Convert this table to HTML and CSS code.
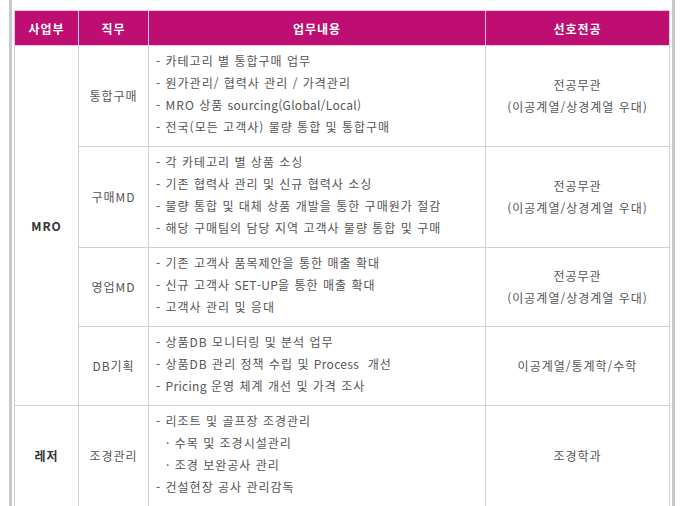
FILE: index.html
```html
<!DOCTYPE html>
<html lang="ko">
<head>
<meta charset="utf-8">
<link rel="stylesheet" href="styles.css">
</head>
<body>
<div class="wrap">
<table class="jobs">
<colgroup>
<col class="c1"><col class="c2"><col class="c3"><col class="c4">
</colgroup>
<thead>
<tr><th>사업부</th><th>직무</th><th>업무내용</th><th>선호전공</th></tr>
</thead>
<tbody>
<tr>
<td class="div" rowspan="4">MRO</td>
<td class="job">통합구매</td>
<td class="desc">- 카테고리 별 통합구매 업무<br>- 원가관리/ 협력사 관리 / 가격관리<br>- MRO 상품 <span class="en">sourcing(Global/Local)</span><br>- 전국(모든 고객사) 물량 통합 및 통합구매</td>
<td class="major">전공무관<br>(이공계열/상경계열 우대)</td>
</tr>
<tr>
<td class="job">구매MD</td>
<td class="desc">- 각 카테고리 별 상품 소싱<br>- 기존 협력사 관리 및 신규 협력사 소싱<br>- 물량 통합 및 대체 상품 개발을 통한 구매원가 절감<br>- 해당 구매팀의 담당 지역 고객사 물량 통합 및 구매</td>
<td class="major">전공무관<br>(이공계열/상경계열 우대)</td>
</tr>
<tr>
<td class="job">영업MD</td>
<td class="desc">- 기존 고객사 품목제안을 통한 매출 확대<br>- 신규 고객사 <span class="en">SET-UP</span>을 통한 매출 확대<br>- 고객사 관리 및 응대</td>
<td class="major">전공무관<br>(이공계열/상경계열 우대)</td>
</tr>
<tr>
<td class="job">DB기획</td>
<td class="desc">- 상품DB 모니터링 및 분석 업무<br>- 상품DB 관리 정책 수립 및 <span class="en">Process</span>&nbsp; 개선<br>- <span class="en">Pricing</span> 운영 체계 개선 및 가격 조사</td>
<td class="major">이공계열/통계학/수학</td>
</tr>
<tr>
<td class="div">레저</td>
<td class="job">조경관리</td>
<td class="desc">- 리조트 및 골프장 조경관리<br><span class="sub">· 수목 및 조경시설관리</span><br><span class="sub">· 조경 보완공사 관리</span><br>- 건설현장 공사 관리감독</td>
<td class="major">조경학과</td>
</tr>
</tbody>
</table>
</div>
</body>
</html>
```
FILE: styles.css
```css
html, body {
  margin: 0;
  padding: 0;
  background: #fff;
}
body {
  font-family: "Noto Sans CJK KR", "Noto Sans", sans-serif;
  font-size: 12px;
  color: #555;
  letter-spacing: 1px;
}
.wrap {
  margin-left: 9px;
  padding: 10px 3px 0 2px;
  border-left: 3px solid #c9c9c9;
  border-right: 3px solid #c9c9c9;
  min-height: 520px;
  box-sizing: border-box;
  width: 666px;
}
.jobs {
  border-collapse: collapse;
  table-layout: fixed;
  width: 655px;
}
.c1 { width: 64px; }
.c2 { width: 70px; }
.c3 { width: 337px; }
.c4 { width: 184px; }
.jobs th {
  background: #be0e71;
  color: #fff;
  font-weight: bold;
  height: 34px;
  padding: 0;
  border: 1px solid #efc3e2;
  font-size: 12px;
  text-align: center;
}
.jobs td {
  border: 1px solid #d2d2d2;
  padding: 4px 7px 8px;
  line-height: 22px;
  vertical-align: middle;
}
.jobs td.div {
  text-align: center;
  font-weight: bold;
  color: #333;
  padding: 0;
}
.jobs td.job {
  text-align: center;
  padding: 0;
}
.jobs td.desc {
  text-align: left;
}
.jobs td.major {
  text-align: center;
  padding: 0;
}
.sub {
  padding-left: 10px;
}
.en {
  letter-spacing: 0.3px;
}
```
